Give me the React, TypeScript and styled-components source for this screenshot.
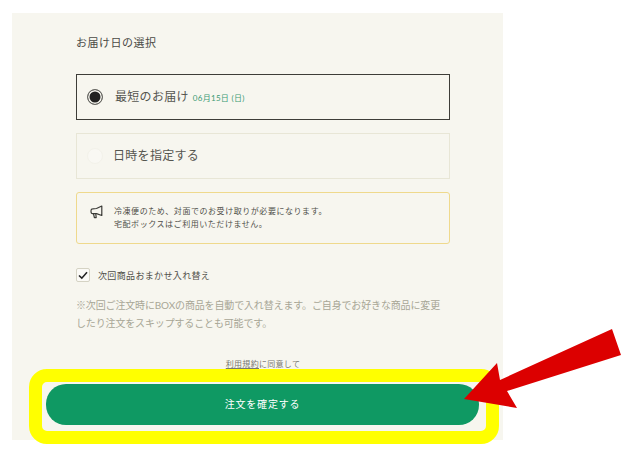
import { ReactElement } from 'react'
import styled, { createGlobalStyle } from 'styled-components'

const GlobalStyle = createGlobalStyle`
  html, body {
    margin: 0;
    padding: 0;
    background: #ffffff;
  }
  body {
    font-family: "Lato", "Noto Sans CJK JP", sans-serif;
    color: #4a4a46;
  }
`

function App(): ReactElement {
  return (
    <Page>
      <GlobalStyle />
      <Panel>
        <Content>
          <Heading>お届け日の選択</Heading>
          <OptionCard $selected>
            <Radio $selected />
            <OptionLabel>最短のお届け</OptionLabel>
            <DateLabel>06月15日 (日)</DateLabel>
          </OptionCard>
          <OptionCard>
            <Radio />
            <OptionLabel>日時を指定する</OptionLabel>
          </OptionCard>
          <Notice>
            <svg width="13" height="14" viewBox="0 0 13 14" fill="none" stroke="#3a3a36" strokeWidth="1.2" strokeLinejoin="round">
              <path d="M11.8 1 L11.8 10.5 L6.5 8.6 L2.6 8.6 Q1 8.6 1 6.2 Q1 3.8 2.6 3.8 L6.5 3.5 Z" />
              <path d="M3.5 8.8 L4.4 12.6 L6.2 12.6 L5.8 9" />
            </svg>
            <NoticeText>
              冷凍便のため、対面でのお受け取りが必要になります。
              <br />
              宅配ボックスはご利用いただけません。
            </NoticeText>
          </Notice>
          <CheckRow>
            <CheckBox>
              <svg width="10" height="9" viewBox="0 0 10 9" fill="none" stroke="#222222" strokeWidth="1.6">
                <path d="M1 4.5 L3.8 7.2 L9 1.2" />
              </svg>
            </CheckBox>
            <CheckLabel>次回商品おまかせ入れ替え</CheckLabel>
          </CheckRow>
          <Note>※次回ご注文時にBOXの商品を自動で入れ替えます。ご自身でお好きな商品に変更したり注文をスキップすることも可能です。</Note>
          <Terms>
            <TermsLink>利用規約</TermsLink>に同意して
          </Terms>
        </Content>
        <ConfirmButton type="button">注文を確定する</ConfirmButton>
      </Panel>
      <Highlight />
      <Arrow width="631" height="457" viewBox="0 0 631 457">
        <path d="M464 399 L497 363 L500 380 L612 329 L621 355 L507 391 L517 408 Z" fill="#dc0000" />
      </Arrow>
    </Page>
  )
}

export default App

const Page = styled.div`
  position: relative;
  width: 631px;
  height: 457px;
  padding: 13px 0 0 12px;
  box-sizing: border-box;
  overflow: hidden;
`

const Panel = styled.div`
  width: 491px;
  height: 427px;
  background: #f7f6ef;
  display: flex;
  flex-direction: column;
`

const Content = styled.div`
  padding: 22px 53px 0 64px;
  display: flex;
  flex-direction: column;
`

const Heading = styled.div`
  font-size: 11px;
  line-height: 16px;
  letter-spacing: 0.5px;
  margin-bottom: 23px;
`

const OptionCard = styled.div<{ $selected?: boolean }>`
  height: 46px;
  box-sizing: border-box;
  display: flex;
  align-items: center;
  padding-left: 10px;
  margin-bottom: 13px;
  border: 1px solid ${(p) => (p.$selected ? '#3e3d38' : '#e8e6d6')};
`

const Radio = styled.span<{ $selected?: boolean }>`
  width: 16px;
  height: 16px;
  box-sizing: border-box;
  border-radius: 50%;
  margin-right: ${(p) => (p.$selected ? '12px' : '10px')};
  background: ${(p) => (p.$selected ? '#222222' : '#f9f8f3')};
  border: ${(p) => (p.$selected ? '1px solid #6b6b66' : '1px solid #f3f2ea')};
  box-shadow: ${(p) => (p.$selected ? 'inset 0 0 0 1.5px #f7f6ef' : 'none')};
`

const OptionLabel = styled.span`
  font-size: 12px;
  line-height: 16px;
  letter-spacing: 0.3px;
  color: #55554f;
`

const DateLabel = styled.span`
  font-size: 8px;
  margin-left: 4px;
  letter-spacing: 0.3px;
  color: #3b9a74;
`

const Notice = styled.div`
  height: 52px;
  box-sizing: border-box;
  display: flex;
  align-items: flex-start;
  padding: 12px 0 0 13px;
  border: 1px solid #efd98c;
  border-radius: 3px;
`

const NoticeText = styled.div`
  font-size: 8px;
  line-height: 13px;
  letter-spacing: 0.55px;
  margin-left: 11px;
  color: #4f4f49;
`

const CheckRow = styled.div`
  display: flex;
  align-items: center;
  margin-top: 24px;
`

const CheckBox = styled.span`
  width: 14px;
  height: 14px;
  box-sizing: border-box;
  display: flex;
  align-items: center;
  justify-content: center;
  border: 1px solid #d5d3c4;
  border-radius: 2px;
  background: #fbfaf6;
`

const CheckLabel = styled.span`
  font-size: 9px;
  letter-spacing: 0.35px;
  margin-left: 8px;
  color: #4f4f49;
`

const Note = styled.p`
  margin: 14px 0 0;
  padding-right: 6px;
  font-size: 10px;
  line-height: 18px;
  letter-spacing: -0.15px;
  color: #a8a696;
`

const Terms = styled.div`
  margin-top: 26px;
  font-size: 8px;
  line-height: 12px;
  letter-spacing: 0.3px;
  text-align: center;
  color: #77776f;
`

const TermsLink = styled.span`
  text-decoration: underline;
`

const ConfirmButton = styled.button`
  width: 433px;
  height: 41px;
  margin: 14px 0 0 34px;
  padding: 0 0 2px;
  border: none;
  border-radius: 20px;
  background: #0f9963;
  color: #ffffff;
  font-family: inherit;
  font-size: 10px;
  letter-spacing: 0.8px;
`

const Highlight = styled.div`
  position: absolute;
  left: 29px;
  top: 369px;
  width: 470px;
  height: 75px;
  box-sizing: border-box;
  border: 13px solid #ffff00;
  border-radius: 18px;
`

const Arrow = styled.svg`
  position: absolute;
  left: 0;
  top: 0;
`
